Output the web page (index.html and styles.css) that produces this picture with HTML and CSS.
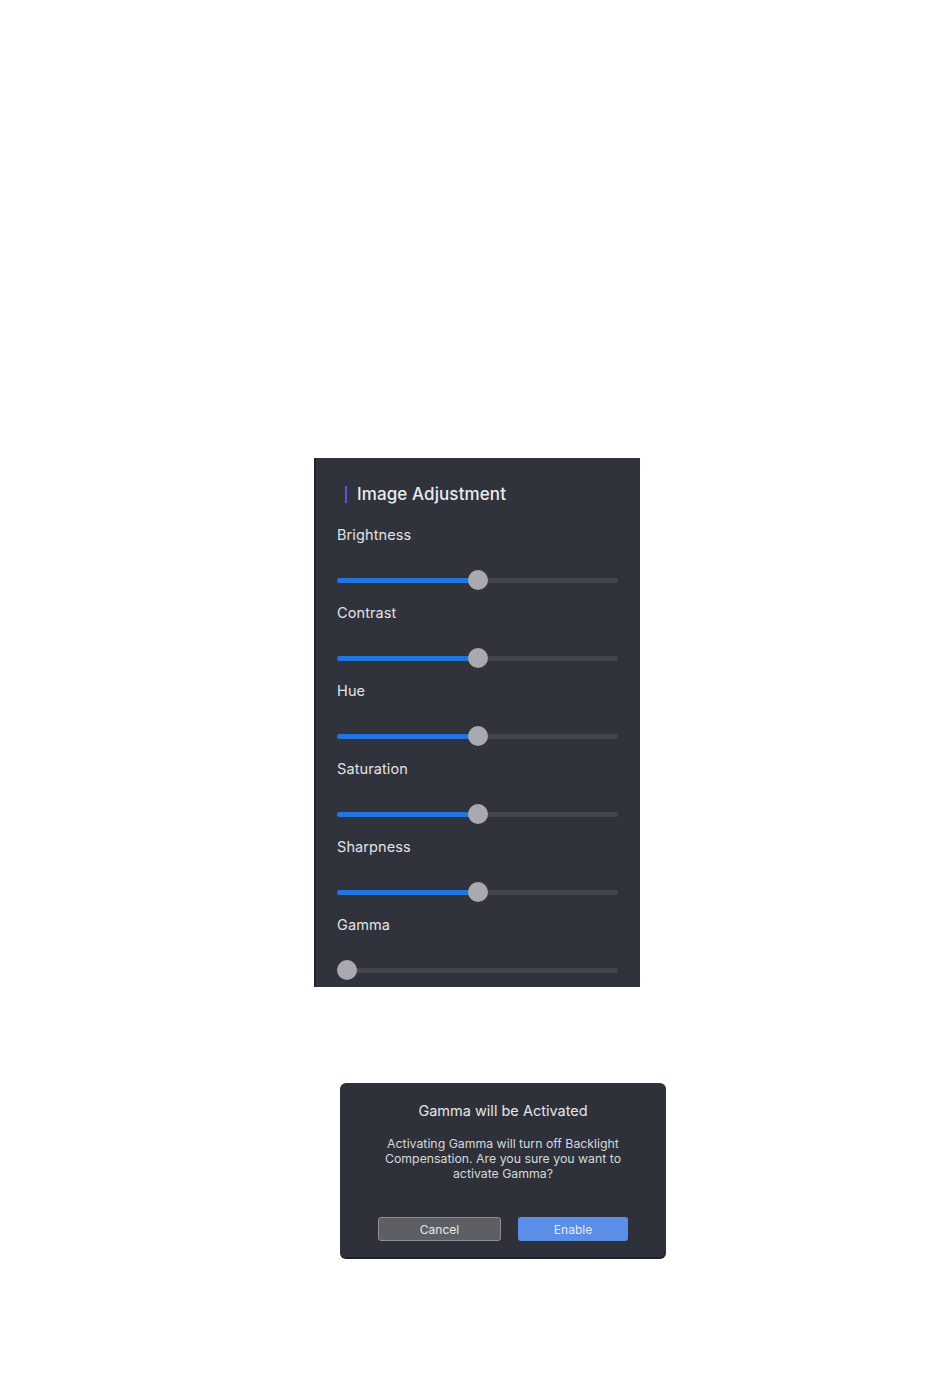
FILE: index.html
```html
<!DOCTYPE html>
<html lang="en">
<head>
    <meta charset="UTF-8">
    <meta name="viewport" content="width=device-width, initial-scale=1.0">
    <title>Image Adjustment</title>
    <link rel="stylesheet" href="styles.css">
</head>
<body>

    <div class="panel">
        <h2 class="panel-title">Image Adjustment</h2>

        <div class="control">
            <div class="control-label">Brightness</div>
            <div class="slider"><div class="track"></div><div class="thumb" style="--v: 0.5"></div></div>
        </div>
        <div class="control">
            <div class="control-label">Contrast</div>
            <div class="slider"><div class="track"></div><div class="thumb" style="--v: 0.5"></div></div>
        </div>
        <div class="control">
            <div class="control-label">Hue</div>
            <div class="slider"><div class="track"></div><div class="thumb" style="--v: 0.5"></div></div>
        </div>
        <div class="control">
            <div class="control-label">Saturation</div>
            <div class="slider"><div class="track"></div><div class="thumb" style="--v: 0.5"></div></div>
        </div>
        <div class="control">
            <div class="control-label">Sharpness</div>
            <div class="slider"><div class="track"></div><div class="thumb" style="--v: 0.5"></div></div>
        </div>
        <div class="control">
            <div class="control-label">Gamma</div>
            <div class="slider"><div class="track"></div><div class="thumb" style="--v: 0"></div></div>
        </div>
    </div>

    <div class="dialog">
        <h3 class="dialog-title">Gamma will be Activated</h3>
        <p class="dialog-text">Activating Gamma will turn off Backlight Compensation. Are you sure you want to activate Gamma?</p>
        <div class="dialog-buttons">
            <button class="btn btn-cancel">Cancel</button>
            <button class="btn btn-enable">Enable</button>
        </div>
    </div>

</body>
</html>
```

FILE: styles.css
```css
body {
    font-family: 'Inter', 'Noto Sans', sans-serif;
    background-color: #fff;
    margin: 0;
    padding: 0;
}

.panel {
    width: 326px;
    box-sizing: border-box;
    margin: 458px 0 0 314px;
    padding: 23px 22px 7px 23px;
    background-color: #30333b;
    border-left: 2px solid #23252a;
}

.panel-title {
    display: flex;
    align-items: center;
    gap: 10px;
    margin: 0 0 18px -2px;
    padding-left: 8px;
    height: 26px;
    font-size: 17px;
    font-weight: 500;
    letter-spacing: 0.1px;
    color: #ececef;
}

.panel-title::before {
    content: '';
    width: 2px;
    height: 17px;
    background-color: #4b5bd6;
}

.control {
    padding-bottom: 13px;
}

.control:last-child {
    padding-bottom: 0;
}

.control-label {
    height: 20px;
    line-height: 20px;
    font-size: 14.5px;
    letter-spacing: 0.1px;
    color: #e2e3e6;
    margin-left: -2px;
    margin-bottom: 25px;
}

.slider {
    position: relative;
    height: 20px;
    margin-left: -2px;
    display: flex;
    align-items: center;
}

.track {
    width: 100%;
    height: 5px;
    border-radius: 3px;
    background-color: #43464e;
}

.control:not(:last-child) .track {
    background: linear-gradient(to right, #1f76e0 0, #1f76e0 50%, #43464e 50%);
}

.thumb {
    position: absolute;
    top: 0;
    left: calc(var(--v) * (100% - 20px));
    width: 20px;
    height: 20px;
    border-radius: 50%;
    background-color: #a8aaaf;
}

.dialog {
    width: 326px;
    height: 176px;
    box-sizing: border-box;
    margin: 96px 0 0 340px;
    padding: 18px 20px 0;
    background-color: #2e3139;
    border-radius: 6px;
    border-bottom: 2px solid #1e2025;
    text-align: center;
}

.dialog-title {
    margin: 0;
    height: 20px;
    line-height: 20px;
    font-size: 14.5px;
    font-weight: 400;
    color: #e4e5e8;
}

.dialog-text {
    width: 260px;
    margin: 15px auto 0;
    font-size: 12.3px;
    line-height: 15px;
    color: #d7d8db;
}

.dialog-buttons {
    display: flex;
    justify-content: center;
    gap: 17px;
    margin-top: 36px;
}

.btn {
    height: 24px;
    border-radius: 3px;
    font-family: inherit;
    font-size: 12px;
    color: #e8e9ec;
    border: none;
    cursor: pointer;
}

.btn-cancel {
    width: 123px;
    background-color: #5d5f64;
    border: 1px solid #8c8e93;
}

.btn-enable {
    width: 110px;
    background-color: #5b8ee6;
}
```
